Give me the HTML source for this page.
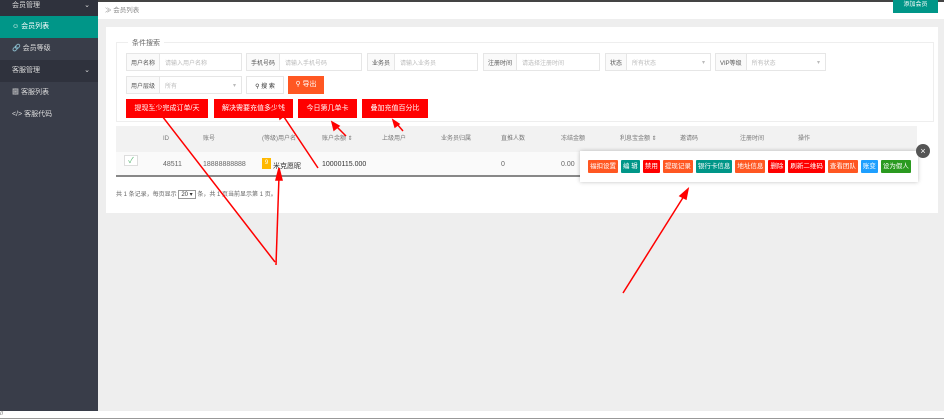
<!DOCTYPE html>
<html><head><meta charset="utf-8"><style>
*{box-sizing:border-box;margin:0;padding:0}
body{width:944px;height:419px;overflow:hidden;background:#eee;font-family:"Liberation Sans","Noto Sans CJK SC",sans-serif;font-size:7px;color:#555;position:relative}
.abs{position:absolute}
.side{left:0;top:0;width:98px;height:411px;background:#393d49}
.si{position:absolute;left:0;width:98px;height:22px;line-height:22px;color:#ddd;font-size:7px;padding-left:12px}
.grp{background:#2f323d}
.inp{position:absolute;height:18px;border:1px solid #e6e6e6;background:#fff;display:flex;align-items:center;font-size:6px}
.inp b{font-weight:normal;background:#fafafa;border-right:1px solid #e6e6e6;height:100%;padding:0 4px;display:flex;align-items:center;color:#555}
.inp i{font-style:normal;color:#bbb;padding-left:5px}
.rb{position:absolute;top:99px;height:19px;background:#f00;color:#fff;font-size:7px;line-height:19px;text-align:center}
.th{position:absolute;top:126px;height:26px;line-height:26px;color:#777;font-size:6px}
.ob{display:inline-block;height:13px;line-height:13px;padding:0 2px;color:#fff;font-size:6.5px;margin-right:3px;border-radius:1px}
</style></head><body>
<div class="abs" style="left:0;top:0;width:944px;height:2px;background:#444"></div>
<div class="abs side"></div>
<div class="si grp" style="top:-5px">会员管理<span style="position:absolute;right:8px">⌄</span></div>
<div class="si" style="top:16px;background:#009688;color:#fff">&#9786; 会员列表</div>
<div class="si" style="top:38px">&#128279; 会员等级</div>
<div class="si grp" style="top:60px">客服管理<span style="position:absolute;right:8px">⌄</span></div>
<div class="si" style="top:82px">&#9641; 客服列表</div>
<div class="si" style="top:104px">&lt;/&gt; 客服代码</div>
<div class="abs" style="left:98px;top:2px;width:846px;height:17px;background:#fff"></div>
<div class="abs" style="left:105px;top:4px;color:#888;font-size:6.5px">≫ 会员列表</div>
<div class="abs" style="left:893px;top:0;width:45px;height:13px;background:#009688;color:#fff;font-size:6px;text-align:center;line-height:11px">添加会员</div>
<div class="abs" style="left:106px;top:27px;width:832px;height:186px;background:#fff"></div>
<div class="abs" style="left:116px;top:42px;width:818px;height:80px;border:1px solid #eee"></div>
<div class="abs" style="left:128px;top:38px;background:#fff;padding:0 4px;color:#666;font-size:7px">条件搜索</div>
<div class="inp" style="left:126px;top:53px;width:116px"><b>用户名称</b><i>请输入用户名称</i></div>
<div class="inp" style="left:246px;top:53px;width:116px"><b>手机号码</b><i>请输入手机号码</i></div>
<div class="inp" style="left:367px;top:53px;width:111px"><b>业务员</b><i>请输入业务员</i></div>
<div class="inp" style="left:483px;top:53px;width:117px"><b>注册时间</b><i>请选择注册时间</i></div>
<div class="inp" style="left:605px;top:53px;width:106px"><b>状态</b><i>所有状态</i><span style="position:absolute;right:5px;color:#bbb">▾</span></div>
<div class="inp" style="left:715px;top:53px;width:111px"><b>VIP等级</b><i>所有状态</i><span style="position:absolute;right:5px;color:#bbb">▾</span></div>
<div class="inp" style="left:126px;top:76px;width:116px"><b>用户层级</b><i>所有</i><span style="position:absolute;right:5px;color:#bbb">▾</span></div>
<div class="inp" style="left:246px;top:76px;width:38px;justify-content:center;color:#333">&#9906; 搜 索</div>
<div class="abs" style="left:288px;top:76px;width:36px;height:18px;background:#ff5722;color:#fff;text-align:center;line-height:18px;font-size:7px">&#9906; 导出</div>
<div class="rb" style="left:126px;width:82px">提现至少完成订单/天</div>
<div class="rb" style="left:214px;width:79px">解决需要充值多少钱</div>
<div class="rb" style="left:298px;width:59px">今日第几单卡</div>
<div class="rb" style="left:362px;width:66px">叠加充值百分比</div>
<div class="abs" style="left:116px;top:126px;width:801px;height:26px;background:#f2f2f2"></div>
<div class="abs" style="left:116px;top:152px;width:801px;height:25px;background:#fafafa;border-bottom:2px solid #888"></div>
<div class="th" style="left:163px">ID</div><div class="th" style="left:203px">账号</div><div class="th" style="left:262px">(等级)用户名</div><div class="th" style="left:322px">账户余额 ⇕</div><div class="th" style="left:382px">上级用户</div><div class="th" style="left:441px">业务员归属</div><div class="th" style="left:501px">直推人数</div><div class="th" style="left:561px">冻结金额</div><div class="th" style="left:620px">利息宝金额 ⇕</div><div class="th" style="left:680px">邀请码</div><div class="th" style="left:740px">注册时间</div><div class="th" style="left:798px">操作</div>
<div class="abs" style="left:124px;top:155px;width:14px;height:11px;border:1px solid #ddd;background:#fff;color:#5fb878;font-size:8px;text-align:center;line-height:9px">✓</div>
<div class="abs" style="left:163px;top:161px;color:#666">48511</div>
<div class="abs" style="left:203px;top:161px;color:#666">18888888888</div>
<div class="abs" style="left:262px;top:158px;width:9px;height:11px;background:#ffb800;color:#fff;font-size:6px;text-align:center;line-height:11px">9</div>
<div class="abs" style="left:273px;top:161px;color:#333">米克愿昵</div>
<div class="abs" style="left:322px;top:161px;color:#333">10000115.000</div>
<div class="abs" style="left:501px;top:161px;color:#666">0</div>
<div class="abs" style="left:561px;top:161px;color:#666">0.00</div>
<div class="abs" style="left:580px;top:151px;width:338px;height:31px;background:#fff;box-shadow:0 0 4px rgba(0,0,0,.25);padding:9px 0 0 8px;white-space:nowrap;font-size:0"><span class="ob" style="background:#ff5722">福扣设置</span><span class="ob" style="background:#009688">编 辑</span><span class="ob" style="background:#f00">禁用</span><span class="ob" style="background:#ff5722">提现记录</span><span class="ob" style="background:#009688">银行卡信息</span><span class="ob" style="background:#ff5722">地址信息</span><span class="ob" style="background:#f00">删除</span><span class="ob" style="background:#f00">刷新二维码</span><span class="ob" style="background:#ff5722">查看团队</span><span class="ob" style="background:#1e9fff">账变</span><span class="ob" style="background:#2a9a20">设为假人</span></div>
<div class="abs" style="left:916px;top:144px;width:14px;height:14px;border-radius:50%;background:#555;color:#fff;text-align:center;line-height:14px;font-size:9px">×</div>
<div class="abs" style="left:116px;top:189px;color:#666;font-size:6px">共 1 条记录，每页显示 <span style="display:inline-block;border:1px solid #999;padding:0 2px;color:#333">20 ▾</span> 条，共 1 页当前显示第 1 页。</div>
<div class="abs" style="left:0;top:411px;width:944px;height:8px;background:#fff;border-bottom:1px solid #999;font-size:6px;color:#666;line-height:7px">//</div>
<svg class="abs" style="left:0;top:0" width="944" height="419"><g stroke="#f00" stroke-width="1.5" fill="#f00">
<line x1="275" y1="262" x2="152" y2="103"/>
<line x1="276" y1="265" x2="279" y2="176"/><polygon points="279,168 276,180 282,180"/>
<line x1="318" y1="168" x2="282" y2="114"/><polygon points="278,108 280,119 285,115"/>
<line x1="346" y1="136" x2="336" y2="126"/><polygon points="332,122 334,130 339,126"/>
<line x1="403" y1="131" x2="397" y2="124"/><polygon points="393,120 395,127 399,124"/>
<line x1="623" y1="293" x2="684" y2="196"/><polygon points="688,189 680,196 686,199"/>
</g></svg>
</body></html>
